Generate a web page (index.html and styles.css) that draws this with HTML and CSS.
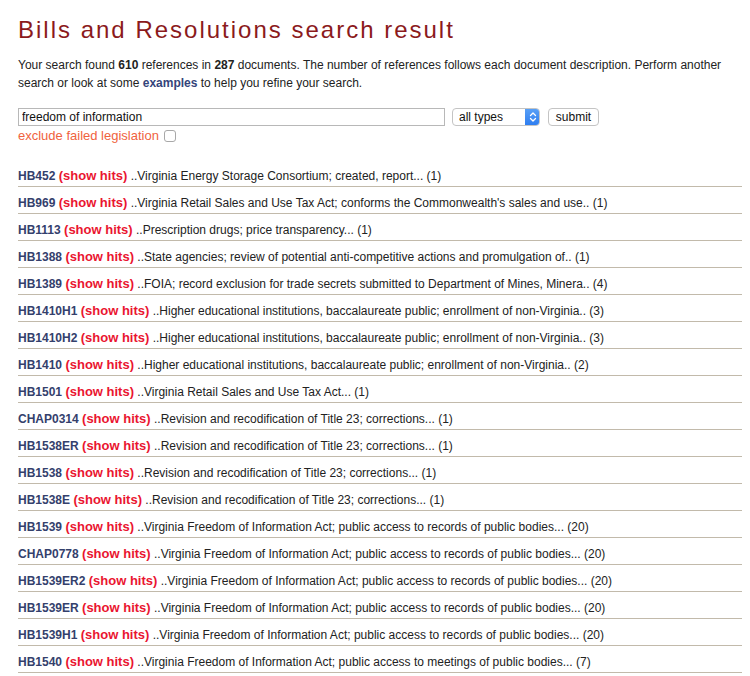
FILE: index.html
```html
<!DOCTYPE html>
<html lang="en">
<head>
<meta charset="utf-8">
<title>Bills and Resolutions search result</title>
<link rel="stylesheet" href="styles.css">
</head>
<body>
<div class="page">
  <h1 class="title">Bills and Resolutions search result</h1>
  <p class="intro">Your search found <b>610</b> references in <b>287</b> documents. The number of references follows each document description. Perform another search or look at some <a class="ex" href="#">examples</a> to help you refine your search.</p>
  <form class="search">
    <div class="search-row">
      <input class="query" type="text" value="freedom of information">
      <div class="select-wrap">
        <select class="types"><option>all types</option></select>
        <span class="arrows"><svg width="8" height="12" viewBox="0 0 8 12"><path d="M1.5 4.5 L4 2 L6.5 4.5 M1.5 7.5 L4 10 L6.5 7.5" fill="none" stroke="#fff" stroke-width="1.3" stroke-linecap="round" stroke-linejoin="round"/></svg></span>
      </div>
      <button class="submit" type="button">submit</button>
    </div>
    <label class="exclude">exclude failed legislation <span class="box"></span></label>
  </form>
  <ul class="results">
    <li class="row"><a class="code" href="#">HB452</a> <a class="hits" href="#">(show hits)</a> <span class="desc">..Virginia Energy Storage Consortium; created, report... (1)</span></li>
    <li class="row"><a class="code" href="#">HB969</a> <a class="hits" href="#">(show hits)</a> <span class="desc">..Virginia Retail Sales and Use Tax Act; conforms the Commonwealth's sales and use.. (1)</span></li>
    <li class="row"><a class="code" href="#">HB1113</a> <a class="hits" href="#">(show hits)</a> <span class="desc">..Prescription drugs; price transparency... (1)</span></li>
    <li class="row"><a class="code" href="#">HB1388</a> <a class="hits" href="#">(show hits)</a> <span class="desc">..State agencies; review of potential anti-competitive actions and promulgation of.. (1)</span></li>
    <li class="row"><a class="code" href="#">HB1389</a> <a class="hits" href="#">(show hits)</a> <span class="desc">..FOIA; record exclusion for trade secrets submitted to Department of Mines, Minera.. (4)</span></li>
    <li class="row"><a class="code" href="#">HB1410H1</a> <a class="hits" href="#">(show hits)</a> <span class="desc">..Higher educational institutions, baccalaureate public; enrollment of non-Virginia.. (3)</span></li>
    <li class="row"><a class="code" href="#">HB1410H2</a> <a class="hits" href="#">(show hits)</a> <span class="desc">..Higher educational institutions, baccalaureate public; enrollment of non-Virginia.. (3)</span></li>
    <li class="row"><a class="code" href="#">HB1410</a> <a class="hits" href="#">(show hits)</a> <span class="desc">..Higher educational institutions, baccalaureate public; enrollment of non-Virginia.. (2)</span></li>
    <li class="row"><a class="code" href="#">HB1501</a> <a class="hits" href="#">(show hits)</a> <span class="desc">..Virginia Retail Sales and Use Tax Act... (1)</span></li>
    <li class="row"><a class="code" href="#">CHAP0314</a> <a class="hits" href="#">(show hits)</a> <span class="desc">..Revision and recodification of Title 23; corrections... (1)</span></li>
    <li class="row"><a class="code" href="#">HB1538ER</a> <a class="hits" href="#">(show hits)</a> <span class="desc">..Revision and recodification of Title 23; corrections... (1)</span></li>
    <li class="row"><a class="code" href="#">HB1538</a> <a class="hits" href="#">(show hits)</a> <span class="desc">..Revision and recodification of Title 23; corrections... (1)</span></li>
    <li class="row"><a class="code" href="#">HB1538E</a> <a class="hits" href="#">(show hits)</a> <span class="desc">..Revision and recodification of Title 23; corrections... (1)</span></li>
    <li class="row"><a class="code" href="#">HB1539</a> <a class="hits" href="#">(show hits)</a> <span class="desc">..Virginia Freedom of Information Act; public access to records of public bodies... (20)</span></li>
    <li class="row"><a class="code" href="#">CHAP0778</a> <a class="hits" href="#">(show hits)</a> <span class="desc">..Virginia Freedom of Information Act; public access to records of public bodies... (20)</span></li>
    <li class="row"><a class="code" href="#">HB1539ER2</a> <a class="hits" href="#">(show hits)</a> <span class="desc">..Virginia Freedom of Information Act; public access to records of public bodies... (20)</span></li>
    <li class="row"><a class="code" href="#">HB1539ER</a> <a class="hits" href="#">(show hits)</a> <span class="desc">..Virginia Freedom of Information Act; public access to records of public bodies... (20)</span></li>
    <li class="row"><a class="code" href="#">HB1539H1</a> <a class="hits" href="#">(show hits)</a> <span class="desc">..Virginia Freedom of Information Act; public access to records of public bodies... (20)</span></li>
    <li class="row"><a class="code" href="#">HB1540</a> <a class="hits" href="#">(show hits)</a> <span class="desc">..Virginia Freedom of Information Act; public access to meetings of public bodies... (7)</span></li>
  </ul>
</div>
</body>
</html>
```

FILE: styles.css
```css
html, body {
  margin: 0;
  padding: 0;
  background: #fff;
}
body {
  margin: 0 8px 0 8px;
  font-family: "Liberation Sans", Arial, sans-serif;
  color: #222;
  font-size: 12px;
}
.page {
  padding-left: 10px;
}
.title {
  margin: 0;
  padding-top: 16px;
  font-size: 24px;
  line-height: 28px;
  font-weight: normal;
  letter-spacing: 2px;
  color: #8b1a1c;
}
.intro {
  margin: 12px 0 0 0;
  font-size: 12px;
  line-height: 18px;
  color: #222;
  padding-right: 2px;
}
.intro b {
  font-weight: bold;
}
.ex {
  color: #34447a;
  font-weight: bold;
  text-decoration: none;
}
.search {
  margin-top: 16px;
}
.search-row {
  display: flex;
  align-items: center;
  height: 18px;
}
.query {
  box-sizing: border-box;
  width: 427px;
  height: 18px;
  margin: 0;
  padding: 0 3px;
  border: 1px solid #b8b8b8;
  font-family: "Liberation Sans", Arial, sans-serif;
  font-size: 12px;
  color: #111;
  background: #fff;
  outline: none;
}
.select-wrap {
  position: relative;
  box-sizing: border-box;
  margin-left: 7px;
  width: 88px;
  height: 18px;
  border: 1px solid #c4c4c4;
  border-radius: 4px;
  background: #fff;
  display: flex;
  align-items: center;
  overflow: hidden;
}
.types {
  appearance: none;
  -webkit-appearance: none;
  border: none;
  background: transparent;
  flex: 1;
  height: 16px;
  padding: 0 0 0 6px;
  margin: 0;
  font-family: "Liberation Sans", Arial, sans-serif;
  font-size: 12px;
  color: #111;
  outline: none;
}
.arrows {
  width: 15px;
  height: 18px;
  margin-right: -1px;
  background: linear-gradient(#5aa1f6, #2c7cf0);
  border-radius: 0 4px 4px 0;
  display: flex;
  align-items: center;
  justify-content: center;
}
.submit {
  box-sizing: border-box;
  margin-left: 8px;
  height: 18px;
  width: 51px;
  padding: 0;
  border: 1px solid #c4c4c4;
  border-radius: 4px;
  background: #fff;
  font-family: "Liberation Sans", Arial, sans-serif;
  font-size: 12px;
  color: #111;
}
.exclude {
  display: flex;
  align-items: center;
  margin-top: 1px;
  font-size: 13px;
  line-height: 18px;
  color: #f0623e;
}
.box {
  display: inline-block;
  box-sizing: border-box;
  width: 12px;
  height: 12px;
  margin-left: 5px;
  border: 1px solid #a8a8a8;
  border-radius: 3px;
  background: #fff;
}
.results {
  list-style: none;
  margin: 15px 0 0 0;
  padding: 0;
}
.row {
  height: 15px;
  padding: 8px 0 3px 0;
  line-height: 15px;
  border-bottom: 1px solid #c2baab;
  white-space: nowrap;
}
.code {
  font-weight: bold;
  font-size: 12px;
  color: #34406c;
  text-decoration: none;
}
.hits {
  font-weight: bold;
  font-size: 13px;
  line-height: 15px;
  color: #ea1530;
  text-decoration: none;
}
.desc {
  font-size: 12px;
  color: #222;
}
```
